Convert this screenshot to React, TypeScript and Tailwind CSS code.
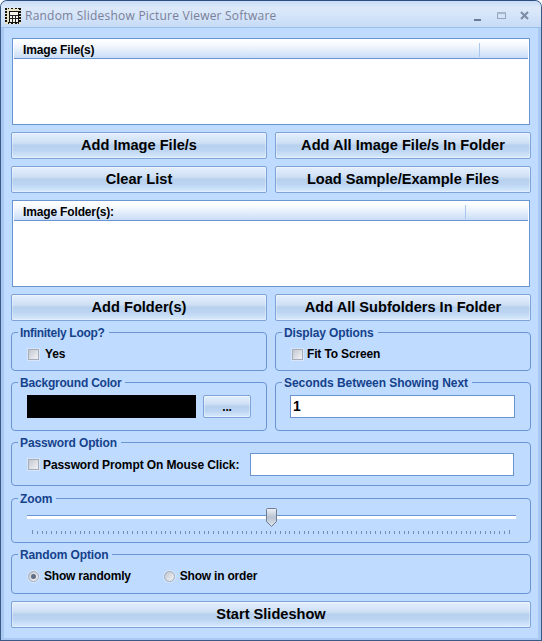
import React from "react";

const font = "font-['Liberation_Sans',Arial,sans-serif]";

function Btn({ children, className = "" }: { children: React.ReactNode; className?: string }) {
  return (
    <button className={`flex items-center justify-center rounded-[2px] border border-[#7ea3d6] bg-[linear-gradient(#e4effc_0%,#cfe0f5_38%,#b7d0ee_50%,#bcd5f2_70%,#d8eafd_100%)] font-bold text-black shadow-[inset_0_0_0_1px_rgba(255,255,255,0.35)] ${className}`}>
      {children}
    </button>
  );
}

function Group({ title, className = "", tracking = "tracking-[-0.12px]", children }: { title: string; className?: string; tracking?: string; children: React.ReactNode }) {
  return (
    <fieldset className={`min-w-0 rounded-[4px] border border-[#6b95d2] ${className}`}>
      <legend className={`ml-[6px] pl-[2px] pr-[4px] text-[12px] leading-[13px] font-bold text-[#15428b] ${tracking}`}>
        <span className="block translate-y-[1px]">{title}</span>
      </legend>
      {children}
    </fieldset>
  );
}

function List({ title, colRight }: { title: string; colRight: number }) {
  return (
    <div className="flex h-[87px] flex-col border border-[#6b95d2] bg-white">
      <div className="mx-[1px] mt-[1px] flex h-[19px] items-center justify-between border-b border-[#6b95d2] bg-[linear-gradient(#ffffff_0%,#f4f8fe_30%,#c9ddf8_100%)] pl-[9px] pt-[1px] text-[12px] tracking-[-0.15px] font-bold text-black">
        <span>{title}</span>
        <span className="h-[14px] border-l border-[#a9c6ec]" style={{ marginRight: colRight }} />
      </div>
    </div>
  );
}

function Check() {
  return <span className="block h-[11px] w-[11px] shrink-0 border border-[#a4adbb] bg-[linear-gradient(135deg,#c3c8d0,#f2f3f5)] shadow-[0_0_0_1px_#d9e6f8]" />;
}

function Radio({ on }: { on?: boolean }) {
  return (
    <span className="flex h-[11px] w-[11px] shrink-0 items-center justify-center rounded-full border border-[#a4adbb] bg-[linear-gradient(135deg,#c3c8d0,#f2f3f5)] shadow-[0_0_0_1px_#d9e6f8]">
      {on && <span className="h-[5px] w-[5px] rounded-full bg-[#5f6f86]" />}
    </span>
  );
}

function WinIcon() {
  return (
    <svg width="16" height="16" viewBox="0 0 16 16" className="shrink-0" shapeRendering="crispEdges">
      <rect x="0" y="0" width="16" height="16" fill="#e9e4c8" />
      <path d="M0 1h2M0 4h2M0 7h2M0 10h2M0 13h2M14 1h2M14 4h2M14 7h2M14 10h2M14 13h2M3 0h1M6 0h2M10 0h2M13 0h1M3 15h1M6 15h2M10 15h2M13 15h1" stroke="#111" strokeWidth="2" />
      <rect x="4" y="3" width="9" height="11" fill="#f5f5ee" stroke="#111" />
      <path d="M4 7h9M4 10h9M7 7v7M10 7v7" stroke="#222" />
    </svg>
  );
}

export default function App() {
  const ticks = Array.from({ length: 101 }, (_, i) => i);
  return (
    <div className={`${font} flex h-[641px] w-[542px] flex-col overflow-hidden rounded-t-[7px] border border-[#3a5a86] border-t-[#2d4f80] bg-[#bfdbff] text-black`}>
      <div className="flex h-[27px] shrink-0 items-center border-b border-[#9cc0ec] bg-[linear-gradient(#c9dcf5_0%,#dce9fa_25%,#d5e5f9_55%,#c6dbf7_100%)] pl-[4px] pr-[10px] pt-[3px]">
        <WinIcon />
        <span className="ml-[4px] text-[12px] tracking-[0.22px] text-[#7b7f98] font-['Open_Sans',sans-serif]">Random Slideshow Picture Viewer Software</span>
        <div className="ml-auto flex items-center gap-[11px]">
          <svg width="14" height="12" viewBox="0 0 14 12" shapeRendering="crispEdges"><rect x="3" y="9" width="7" height="2" fill="#687a95" /></svg>
          <svg width="12" height="12" viewBox="0 0 12 12" shapeRendering="crispEdges"><rect x="1.5" y="2.5" width="8" height="6" fill="#d5e3f6" stroke="#94a6bf" /><rect x="1" y="2" width="9" height="2" fill="#a4b5cc" /></svg>
          <svg width="12" height="12" viewBox="0 0 12 12"><path d="M2 2l7 7M9 2L2 9" stroke="#7d8da6" strokeWidth="2.2" /></svg>
        </div>
      </div>

      <div className="flex flex-1 flex-col border-x-[3px] border-b-[2px] border-[#a9c9f2]">
        <div className="flex flex-1 flex-col pl-[7px] pr-[7px] pt-[10px]">
          <div className="px-[1px]"><List title="Image File(s)" colRight={48} /></div>
          <div className="mt-[7px] grid grid-cols-2 gap-x-[8px] gap-y-[7px] text-[14.6px]">
            <Btn className="h-[27px]">Add Image File/s</Btn>
            <Btn className="h-[27px]">Add All Image File/s In Folder</Btn>
            <Btn className="h-[27px]">Clear List</Btn>
            <Btn className="h-[27px]">Load Sample/Example Files</Btn>
          </div>
          <div className="mt-[7px] px-[1px]"><List title="Image Folder(s):" colRight={62} /></div>
          <div className="mt-[7px] grid grid-cols-2 gap-x-[8px] text-[14.6px]">
            <Btn className="h-[27px]">Add Folder(s)</Btn>
            <Btn className="h-[27px]">Add All Subfolders In Folder</Btn>
          </div>

          <div className="mt-[5px] grid grid-cols-2 gap-x-[8px] gap-y-[5px] text-[12px] tracking-[-0.15px] font-bold">
            <Group title="Infinitely Loop?" tracking="tracking-[-0.3px]" className="h-[45px]">
              <div className="flex items-center pl-[16px] pt-[6px]"><Check /><span className="ml-[6px]">Yes</span></div>
            </Group>
            <Group title="Display Options" className="h-[45px]">
              <div className="flex items-center pl-[16px] pt-[6px]"><Check /><span className="ml-[4px]">Fit To Screen</span></div>
            </Group>
            <Group title="Background Color" tracking="tracking-[-0.2px]" className="h-[55px]">
              <div className="flex items-start pl-[15px] pt-[6px]">
                <div className="h-[23px] w-[169px] bg-black" />
                <Btn className="ml-[7px] h-[23px] w-[48px] text-[12px]">...</Btn>
              </div>
            </Group>
            <Group title="Seconds Between Showing Next" tracking="tracking-[-0.05px]" className="h-[55px]">
              <div className="pl-[14px] pt-[6px]">
                <div className="flex h-[23px] w-[225px] items-center border border-[#6b95d2] bg-white pl-[2px] text-[14px]">1</div>
              </div>
            </Group>
          </div>

          <Group title="Password Option" className="mt-[5px] h-[50px] text-[12px] tracking-[-0.1px] font-bold">
            <div className="flex items-center pl-[16px] pt-[4px]">
              <Check />
              <span className="ml-[4px] w-[198px] whitespace-nowrap">Password Prompt On Mouse Click:</span>
              <div className="ml-[9px] h-[23px] w-[264px] border border-[#6b95d2] bg-white" />
            </div>
          </Group>

          <Group title="Zoom" className="mt-[6px] h-[51px]">
            <div className="relative pl-[15px] pr-[14px] pt-[10px]">
              <div className="h-[4px] border-t border-[#6b95d2] bg-white" />
              <div className="mx-[5px] mt-[11px] flex items-end justify-between">
                {ticks.map((t) => (
                  <span key={t} className={`w-[1px] bg-[#6f8fb8] ${t === 0 || t === 100 ? "h-[4px]" : "h-[3px]"}`} />
                ))}
              </div>
              <svg width="12" height="20" viewBox="0 0 12 20" className="absolute left-[254px] top-[3px]">
                <defs><linearGradient id="th" x1="0" y1="0" x2="0" y2="1"><stop offset="0" stopColor="#eef1f6" /><stop offset="0.5" stopColor="#b9c3d2" /><stop offset="1" stopColor="#dfe5ee" /></linearGradient></defs>
                <path d="M0.5 1.5q0-1 1-1h8q1 0 1 1v12l-5 5l-5-5z" fill="url(#th)" stroke="#6e7d92" />
              </svg>
            </div>
          </Group>

          <Group title="Random Option" className="mt-[5px] h-[46px] text-[12px] tracking-[-0.2px] font-bold">
            <div className="flex items-center pl-[16px] pt-[6px]">
              <Radio on />
              <span className="ml-[5px]">Show randomly</span>
              <span className="ml-[33px] flex items-center"><Radio /><span className="ml-[5px]">Show in order</span></span>
            </div>
          </Group>

          <Btn className="mt-[7px] h-[27px] w-full text-[14.6px]">Start Slideshow</Btn>
        </div>
      </div>
    </div>
  );
}
